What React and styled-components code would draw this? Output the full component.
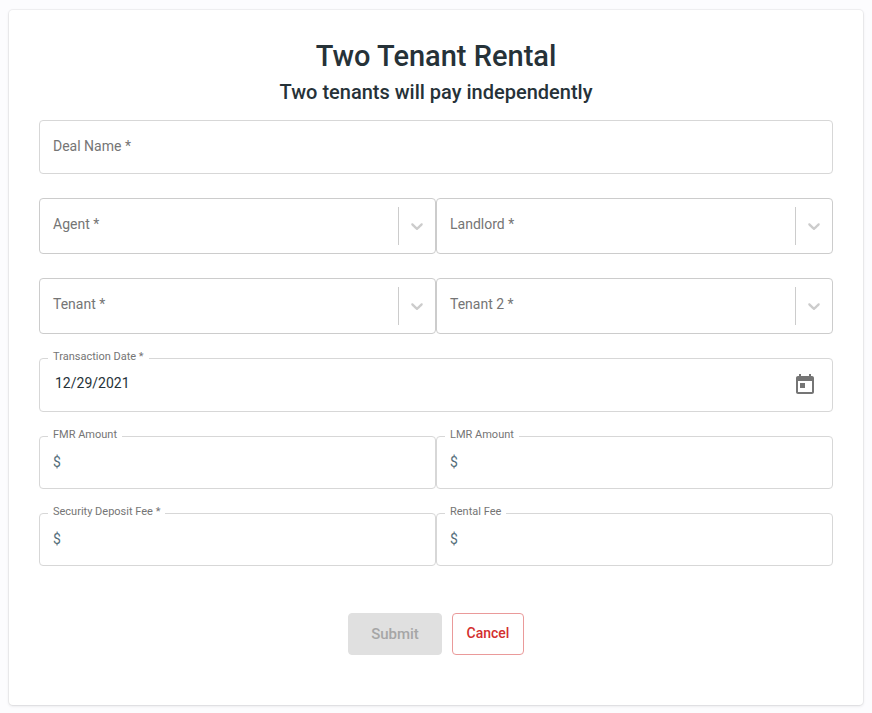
import { useState } from "react";
import styled, { createGlobalStyle } from "styled-components";

const GlobalStyle = createGlobalStyle`
  * {
    box-sizing: border-box;
  }

  body {
    margin: 0;
    background-color: #fcfcfe;
    color: #263238;
    font-family: Roboto, "Liberation Sans", sans-serif;
    font-size: 14px;
  }
`;

const Card = styled.main`
  margin: 10px 9px 8px;
  padding: 28px 30px 50px;
  background-color: #fff;
  border-radius: 4px;
  box-shadow: 0 0 0 1px rgba(63, 63, 68, 0.05), 0 1px 3px 0 rgba(63, 63, 68, 0.15);
`;

const Title = styled.h1`
  margin: 0;
  font-size: 29px;
  line-height: 36px;
  font-weight: 500;
  text-align: center;
`;

const Subtitle = styled.h2`
  margin: 6px 0 16px;
  font-size: 20px;
  line-height: 24px;
  font-weight: 500;
  text-align: center;
`;

const Form = styled.form`
  display: flex;
  flex-direction: column;
  gap: 24px;
`;

const Row = styled.div`
  display: grid;
  grid-template-columns: repeat(${(props) => props.$columns || 1}, minmax(0, 1fr));
`;

const Outline = styled.div`
  position: relative;
  display: grid;
  grid-template-columns: ${(props) => props.$template || "1fr"};
  align-items: center;
  height: ${(props) => props.$height || 54}px;
  border: 1px solid ${(props) => props.$color || "#d7d7d7"};
  border-radius: 4px;

  &:focus-within {
    border-color: #3f51b5;
  }
`;

//label that sits on the border line
const FloatingLabel = styled.label`
  position: absolute;
  top: -9px;
  left: 8px;
  padding: 0 5px;
  background-color: #fff;
  color: #757575;
  font-size: 11px;
  line-height: 14px;
`;

//label that rests inside an empty field
const RestingLabel = styled.label`
  grid-area: 1 / 1;
  padding: 0 13px ${(props) => props.$lift || 0}px;
  color: #757575;
  line-height: 16px;
  pointer-events: none;
`;

const Input = styled.input`
  grid-area: 1 / ${(props) => props.$column || 1};
  width: 100%;
  height: 100%;
  padding: 0 14px 4px ${(props) => props.$indent || 0}px;
  border: 0;
  outline: 0;
  background: transparent;
  color: #263238;
  font: inherit;
`;

const Prefix = styled.span`
  grid-area: 1 / 1;
  padding: 0 8px 1px 13px;
  color: #546e7a;
  line-height: 16px;
`;

const Select = styled.select`
  grid-area: 1 / 1 / 2 / -1;
  width: 100%;
  height: 100%;
  padding: 0 48px 4px 13px;
  border: 0;
  border-radius: 4px;
  outline: 0;
  appearance: none;
  background: transparent;
  color: #263238;
  font: inherit;
`;

const Divider = styled.span`
  grid-area: 1 / 2;
  height: 38px;
  background-color: #ccc;
  pointer-events: none;
`;

const Chevron = styled.svg`
  grid-area: 1 / 3;
  justify-self: center;
  width: 20px;
  height: 20px;
  fill: #ccc;
  pointer-events: none;
`;

const IconButton = styled.button`
  display: flex;
  margin-right: 15px;
  padding: 0;
  border: 0;
  background: none;
  color: #757575;
  cursor: pointer;
`;

const Actions = styled.div`
  display: flex;
  justify-content: center;
  gap: 10px;
  margin-top: 23px;
`;

const Button = styled.button`
  min-width: ${(props) => (props.$large ? 94 : 72)}px;
  height: 42px;
  padding: 0 12px ${(props) => (props.$large ? 0 : 2)}px;
  border: 1px solid ${(props) => (props.$large ? "#e0e0e0" : "#ea9a9a")};
  border-radius: 4px;
  background-color: ${(props) => (props.$large ? "#e0e0e0" : "#fff")};
  color: ${(props) => (props.$large ? "#a6a6a6" : "#d32f2f")};
  font-family: inherit;
  font-size: ${(props) => (props.$large ? 15 : 14)}px;
  font-weight: 500;
`;

function DealField() {
  const [name, setName] = useState("");

  return (
    <Outline>
      <RestingLabel htmlFor="dealName" $lift={2} hidden={name !== ""}>Deal Name *</RestingLabel>
      <Input id="dealName" $indent={13} value={name} onChange={(e) => setName(e.target.value)} />
    </Outline>
  );
}

function SelectField({ id, label }) {
  return (
    <Outline $height={56} $color="#ccc" $template="1fr 1px 36px">
      <Select id={id} defaultValue="">
        <option value=""></option>
      </Select>
      <RestingLabel htmlFor={id} $lift={4}>{label}</RestingLabel>
      <Divider />
      <Chevron viewBox="0 0 20 20" aria-hidden="true">
        <path d="M4.516 7.548c0.436-0.446 1.043-0.481 1.576 0l3.908 3.747 3.908-3.747c0.533-0.481 1.141-0.446 1.574 0 0.436 0.445 0.408 1.197 0 1.615-0.406 0.418-4.695 4.502-4.695 4.502-0.217 0.223-0.502 0.335-0.787 0.335s-0.57-0.112-0.789-0.335c0 0-4.287-4.084-4.695-4.502s-0.436-1.17 0-1.615z" />
      </Chevron>
    </Outline>
  );
}

function DateField() {
  const [date, setDate] = useState("12/29/2021");

  return (
    <Outline $template="1fr auto">
      <FloatingLabel htmlFor="date">Transaction Date *</FloatingLabel>
      <Input id="date" $indent={15} value={date} onChange={(e) => setDate(e.target.value)} />
      <IconButton type="button" aria-label="Change date">
        <svg width="24" height="24" viewBox="0 0 24 24" fill="currentColor" aria-hidden="true">
          <path d="M19 3h-1V1h-2v2H8V1H6v2H5c-1.11 0-1.99.9-1.99 2L3 19c0 1.1.89 2 2 2h14c1.1 0 2-.9 2-2V5c0-1.1-.9-2-2-2zm0 16H5V8h14v11zM7 10h5v5H7z" />
        </svg>
      </IconButton>
    </Outline>
  );
}

function MoneyField({ id, label }) {
  return (
    <Outline $height={53} $template="auto 1fr">
      <FloatingLabel htmlFor={id}>{label}</FloatingLabel>
      <Prefix>$</Prefix>
      <Input id={id} $column={2} inputMode="decimal" />
    </Outline>
  );
}

export default function App() {
  return (
    <>
      <GlobalStyle />
      <Card>
        <Title>Two Tenant Rental</Title>
        <Subtitle>Two tenants will pay independently</Subtitle>
        <Form onSubmit={(e) => e.preventDefault()}>
          <Row>
            <DealField />
          </Row>
          <Row $columns={2}>
            <SelectField id="agent" label="Agent *" />
            <SelectField id="landlord" label="Landlord *" />
          </Row>
          <Row $columns={2}>
            <SelectField id="tenant" label="Tenant *" />
            <SelectField id="tenant2" label="Tenant 2 *" />
          </Row>
          <Row>
            <DateField />
          </Row>
          <Row $columns={2}>
            <MoneyField id="fmr" label="FMR Amount" />
            <MoneyField id="lmr" label="LMR Amount" />
          </Row>
          <Row $columns={2}>
            <MoneyField id="deposit" label="Security Deposit Fee *" />
            <MoneyField id="rentalFee" label="Rental Fee" />
          </Row>
          <Actions>
            <Button type="submit" $large disabled>Submit</Button>
            <Button type="button">Cancel</Button>
          </Actions>
        </Form>
      </Card>
    </>
  );
}
